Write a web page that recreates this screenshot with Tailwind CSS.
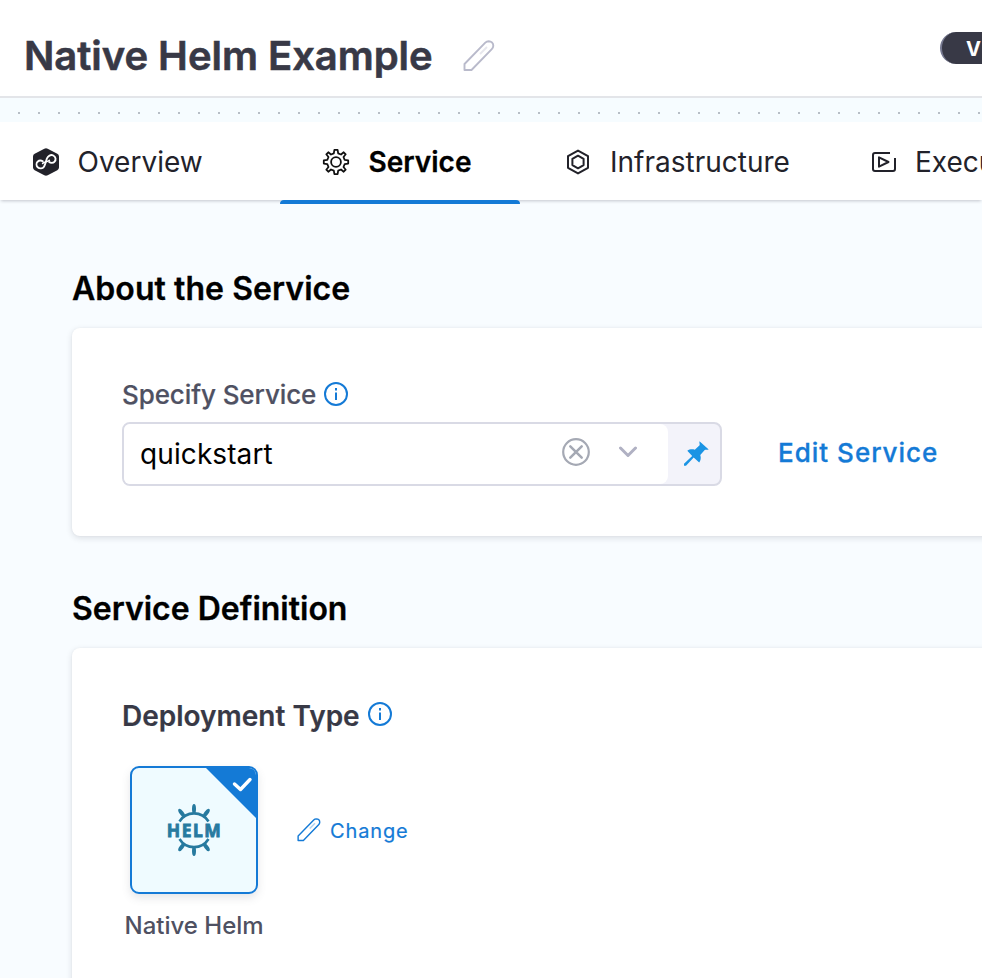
<!DOCTYPE html>
<html lang="en">
<head>
<meta charset="utf-8">
<title>Native Helm Example</title>
<script src="https://cdn.jsdelivr.net/npm/@tailwindcss/browser@4"></script>
</head>
<body class="w-[982px] h-[978px] overflow-hidden bg-[#f8fcff] font-['Inter',sans-serif] text-black">
<svg width="0" height="0" class="absolute">
  <defs>
    <symbol id="pencil" viewBox="0 0 32 32"><path d="M1.500 30V24L22.300 2.700a5 5 0 0 1 3.400-1.500c2.600 0 4.600 1.900 4.600 4.500a5 5 0 0 1-1.500 3.400L8.500 30z" fill="none" stroke="currentColor" stroke-width="1.900" stroke-linejoin="round"/><path d="M17 14l7-7" fill="none" stroke="currentColor" stroke-width="1.800" opacity=".35"/></symbol>
    <symbol id="info" viewBox="0 0 24 24"><circle cx="12" cy="12" r="11" fill="none" stroke="currentColor" stroke-width="2"/><path d="M12 10.500v7.500M12 6v2.500" stroke="currentColor" stroke-width="2"/></symbol>
  </defs>
</svg>
<header class="flex h-[98px] justify-between border-b-2 border-[#e3e5e9] bg-white">
  <div class="flex items-center pt-4 pl-6">
    <h1 class="w-[439px] whitespace-nowrap text-[40px] leading-[48px] font-semibold tracking-[-0.04px] text-[#383946] [-webkit-text-stroke:0.6px_#383946]">Native Helm Example</h1>
    <svg class="mb-px size-8 text-[#b9bacb]"><use href="#pencil"/></svg>
  </div>
  <div class="mt-8 h-8 w-[42px] overflow-hidden rounded-l-full border-l-2 border-[#777a92] bg-[#383946] pl-6 text-[20px] leading-[34px] font-bold text-white">V</div>
</header>
<div class="h-6 bg-[#f6fcff]">
  <svg width="982" height="24"><defs><pattern id="dots" x="18" y="14" width="20" height="24" patternUnits="userSpaceOnUse"><rect width="2" height="2" fill="#b7bec6"/></pattern></defs><rect width="982" height="24" fill="url(#dots)"/></svg>
</div>
<nav class="relative flex h-[78px] bg-white text-[28px] leading-[34px] whitespace-nowrap text-[#22222a] shadow-[0_2px_3px_-1px_#28293d40]">
  <div class="flex w-[280px] shrink-0 items-center pt-[2px] pl-8">
    <svg class="mr-[17.500px] size-7" viewBox="0 0 28 28"><path d="M12.300.7a3.400 3.400 0 0 1 3.400 0l9.600 5.100a3.100 3.100 0 0 1 1.700 2.700v11a3.100 3.100 0 0 1-1.700 2.700l-9.600 5.100a3.400 3.400 0 0 1-3.400 0l-9.600-5.100A3.100 3.100 0 0 1 1 19.500v-11a3.100 3.100 0 0 1 1.700-2.700z" fill="#22222a"/><g fill="none" stroke="#fff" stroke-width="1.900" stroke-linecap="round"><path d="M10.800 13.300C9.500 12.500 7 12.400 5.600 13.700 4.200 15.200 4.200 17.800 5.700 19.300 7.500 20.900 10.600 20.800 12 18.700 13.300 16.700 13.800 13.500 14.900 10.500 15.900 7.800 18.700 6.300 21.300 7.500 23.800 8.700 24.300 11.900 22.500 13.700 21 15.100 18.500 15 17.200 14"/><path d="M10.600 15.400C12 14 15.500 13.700 17.400 12.300" stroke-width="1.500"/></g></svg>
    <span>Overview</span>
  </div>
  <div class="relative flex w-[240px] shrink-0 items-center pt-[2px] pl-[42px] font-semibold text-black">
    <svg class="mr-[18.500px] size-7" viewBox="-14 -14 28 28" fill="none" stroke="#111" stroke-width="1.800" stroke-linejoin="round"><path d="M-1.600-12.200H1.600L2.200-8.700 5-7.500 7.700-9.700 9.700-7.700 7.500-5 8.700-2.200 12.200-1.600V1.600L8.700 2.200 7.500 5 9.700 7.700 7.700 9.700 5 7.500 2.200 8.700 1.600 12.200H-1.600L-2.200 8.700-5 7.500-7.700 9.700-9.700 7.700-7.500 5-8.700 2.200-12.200 1.600V-1.600L-8.700-2.200-7.500-5-9.700-7.700-7.700-9.700-5-7.500-2.200-8.700z"/><circle r="4.900"/></svg>
    <span class="[-webkit-text-stroke:0.300px_#000]">Service</span>
    <div class="absolute top-[78px] left-0 h-1 w-[240px] rounded-t-[4px] bg-[#147ad6]"></div>
  </div>
  <div class="flex w-[350px] shrink-0 items-center pt-[2px] pl-11">
    <svg class="mr-[18px] size-7" viewBox="0 0 28 28" fill="none" stroke="#22222a" stroke-width="2" stroke-linejoin="round"><path d="M14 2.600L24 8.200V19.800L14 25.400 4 19.800V8.200z"/><path d="M14 7.700L19.600 10.900V17.100L14 20.300 8.400 17.100V10.900z"/></svg>
    <span>Infrastructure</span>
  </div>
  <div class="flex w-[112px] items-center overflow-hidden pt-[2px]">
    <svg class="mr-[17px] size-7 shrink-0" viewBox="0 0 28 28" fill="none" stroke="#22222a" stroke-width="2" stroke-linejoin="round"><path d="M20 5H5A2 2 0 0 0 3 7V21A2 2 0 0 0 5 23H23A2 2 0 0 0 25 21V10"/><path d="M9 9.300V18.700L18.500 14z"/></svg>
    <span>Execution</span>
  </div>
</nav>
<main class="h-[778px] overflow-hidden pl-[72px]">
  <h2 class="mt-[69px] h-[39px] text-[32px] leading-10 font-semibold tracking-[0.06px] [-webkit-text-stroke:0.300px_#000]">About the Service</h2>
  <section class="mt-5 h-[208px] w-[930px] rounded-[8px] bg-white pt-[50px] pl-[50px] shadow-[0_2px_6px_#28293d24,0_0_2px_#60617010]">
    <div class="flex h-8 items-center text-[26px] leading-8 font-medium text-[#4f5162]"><span class="w-[202px] whitespace-nowrap pt-[2px] tracking-[-0.1px] [-webkit-text-stroke:0.200px_#4f5162]">Specify Service</span><svg class="size-6 text-[#147ad6]"><use href="#info"/></svg></div>
    <div class="mt-3 flex items-center">
      <div class="flex h-16 w-[600px] overflow-hidden rounded-[8px] border-2 border-[#d9dae5] bg-[#f3f3fa]">
        <div class="flex w-[544px] items-center rounded-r-[8px] bg-white pl-4">
          <span class="w-[422px] text-[28px] leading-8 tracking-[0.1px]">quickstart</span>
          <svg class="mb-1 size-7" viewBox="0 0 28 28" fill="none" stroke="#a5a9b4" stroke-width="2.200"><circle cx="14" cy="14" r="12.800"/><path d="M8.300 8.300L19.700 19.700M19.700 8.300L8.300 19.700" stroke-width="2.500" stroke-linecap="round"/></svg>
          <svg class="mb-1 ml-[28px] h-3 w-5" viewBox="0 0 20 12" fill="none" stroke="#b0b1c3" stroke-width="3" stroke-linecap="round" stroke-linejoin="round"><path d="M2.500 2L10 9.500L17.500 2"/></svg>
        </div>
        <svg class="mt-[17px] ml-[15px] size-[26px] text-[#1b94e4]" viewBox="0 0 26 26" fill="currentColor"><path d="M16.500 0.200L25.700 8.600C24.200 9.100 22.600 8.600 21.700 9L17.300 14C18.300 17 17.600 19.800 16.200 21.600L10.700 16.500 3 24.700H1V22.800L9.200 15 4.300 9.700C6.500 8.200 9.300 8 11.800 8.700L16.600 4.200C17 3 16.100 1.800 16.500.2z"/></svg>
      </div>
      <span class="mb-[2px] ml-14 whitespace-nowrap text-[26px] leading-8 font-medium tracking-[1px] text-[#147ad6] [-webkit-text-stroke:0.300px_#147ad6]">Edit Service</span>
    </div>
  </section>
  <h2 class="mt-[53px] h-[39px] text-[32px] leading-10 font-semibold [-webkit-text-stroke:0.300px_#000]">Service Definition</h2>
  <section class="mt-5 h-[400px] w-[930px] rounded-[8px] bg-white pt-[50px] pl-[50px] shadow-[0_2px_6px_#28293d24,0_0_2px_#60617010]">
    <div class="flex h-9 items-center text-[28px] leading-9 font-semibold text-[#383946]"><span class="w-[246px] whitespace-nowrap [-webkit-text-stroke:0.200px_#383946]">Deployment Type</span><svg class="mb-1 size-6 text-[#147ad6]"><use href="#info"/></svg></div>
    <div class="mt-8 flex items-center">
      <div class="ml-2 size-32 overflow-hidden rounded-[9px] border-2 border-[#147ad6] bg-[#effbff] shadow-[0_4px_8px_#60617029]">
        <svg width="124" height="124" viewBox="0 0 124 124">
          <path d="M74 0H124V50z" fill="#147ad6"/><path d="M102.500 16L108.500 21.500L118 11.500" fill="none" stroke="#fff" stroke-width="3.400" stroke-linecap="round" stroke-linejoin="round"/>
          <path d="M47.500 53.500A17 17 0 0 1 76.500 53.500M47.500 71A17 17 0 0 0 76.500 71" fill="none" stroke="#277a9f" stroke-width="2.600"/>
          <g fill="#277a9f"><g id="spokes"><ellipse cx="62" cy="41" rx="2" ry="5"/><ellipse cx="62" cy="41" rx="2" ry="5" transform="rotate(36 62 62)"/><ellipse cx="62" cy="41" rx="2" ry="5" transform="rotate(-36 62 62)"/></g><use href="#spokes" transform="rotate(180 62 62)"/></g>
          <text x="34.800" y="68.700" textLength="54" lengthAdjust="spacing" fill="#277a9f" stroke="#277a9f" stroke-width=".8" font-family="Noto Sans" font-weight="700" font-size="17.500">HELM</text>
        </svg>
      </div>
      <svg class="ml-[39px] size-6 text-[#147ad6]"><use href="#pencil"/></svg>
      <span class="mt-[2px] ml-[9px] text-[20px] leading-6 tracking-[0.85px] text-[#147ad6] [-webkit-text-stroke:0.2px_#147ad6]">Change</span>
    </div>
    <div class="mt-4 ml-[2.500px] text-[24px] leading-8 font-medium text-[#4f5162]">Native Helm</div>
  </section>
</main>
</body>
</html>
